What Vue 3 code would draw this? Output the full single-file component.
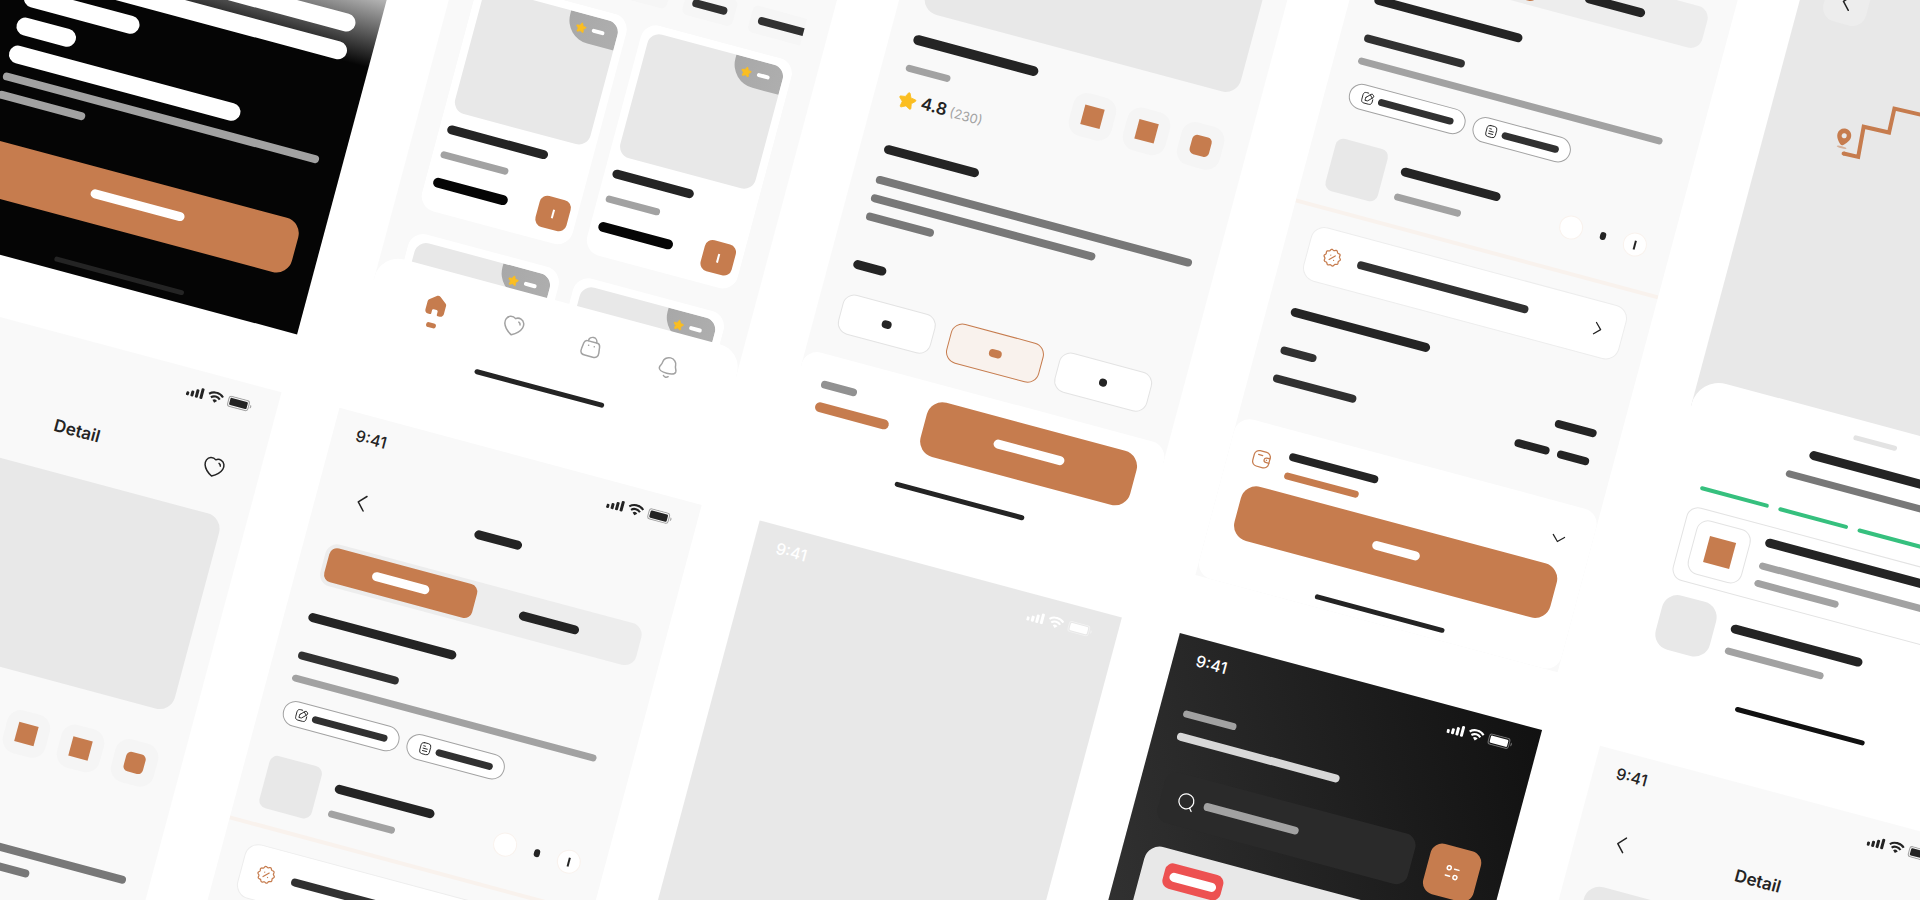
<script setup>
const screens = [
    { id: 1, type: 'welcome' },
    { id: 2, type: 'home' },
    { id: 3, type: 'detail', rating: '4.8', reviews: '(230)' },
    { id: 4, type: 'order' },
    { id: 5, type: 'tracking' },
    { id: 6, type: 'detail', title: 'Detail' },
    { id: 7, type: 'order', time: '9:41' },
    { id: 8, type: 'welcome', time: '9:41' },
    { id: 9, type: 'home', time: '9:41' },
    { id: 10, type: 'detail', time: '9:41', title: 'Detail' },
];

const welcomeLines = [327, 326, 119, 61, 239];
const welcomeNotes = [327, 90];

const chips = [
    { box: 88, bar: 64, active: true },
    { box: 84, bar: 64 },
    { box: 52, bar: 36 },
    { box: 88, bar: 72 },
];

const products = [
    { title: 104, sub: 70, price: 77 },
    { title: 84, sub: 56, price: 77 },
    { title: 104, sub: 70, price: 77 },
    { title: 84, sub: 56, price: 77 },
];

const tabs = [
    { icon: 'home', active: true },
    { icon: 'heart' },
    { icon: 'bag' },
    { icon: 'bell' },
];

const extras = [{ round: false }, { round: false }, { round: true }];
const description = [327, 232, 70];
const sizes = [{ bar: 10 }, { bar: 13, active: true }, { bar: 8 }];

const addressActions = [
    { icon: 'edit', bar: 78 },
    { icon: 'note', bar: 59 },
];

const payments = [
    { label: 37, values: [43] },
    { label: 86, values: [36, 33] },
];

const steps = [true, true, true, false];

// Borde ondulado del icono de descuento
const scallop = () => {
    const points = [];
    for (let i = 0; i < 100; i++) {
        const a = (i / 100) * Math.PI * 2;
        const r = 9.4 + 0.7 * Math.cos(a * 10);
        points.push(`${(12 + r * Math.cos(a)).toFixed(2)} ${(12 + r * Math.sin(a)).toFixed(2)}`);
    }
    return `M${points.join('L')}Z`;
};

const icons = {
    back: ['M15.5 19.5L8.5 12l7-7.5'],
    right: ['M8.5 5l7 7-7 7'],
    down: ['M19 8.5l-7 7-7-7'],
    heart: [
        'M2.87 11.6C1.8 8.25 3.05 4.42 6.57 3.28c1.85-.6 3.9-.24 5.44.92 1.46-1.13 3.57-1.52 5.42-.92 3.52 1.14 4.78 4.97 3.71 8.32-1.67 5.31-9.13 9.4-9.13 9.4S4.6 16.97 2.87 11.6Z',
        'M16 6.7c1.07.35 1.83 1.3 1.92 2.43',
    ],
    bag: [
        'M16.51 21.5H8.17c-3.07 0-5.42-1.11-4.75-5.55l.77-6.05c.41-2.22 1.83-3.07 3.07-3.07h10.18c1.26 0 2.6.91 3.07 3.07l.78 6.05c.57 3.95-1.71 5.55-4.78 5.55Z',
        'M16.65 6.6a4.32 4.32 0 0 0-8.64 0',
        'M15.3 11.1h-.05',
        'M9.47 11.1h-.05',
    ],
    bell: [
        'M12 17.85c5.64 0 8.25-.72 8.5-3.63 0-2.9-1.82-2.72-1.82-6.28C18.68 5.16 16.04 2 12 2S5.32 5.16 5.32 7.94c0 3.56-1.82 3.38-1.82 6.28.25 2.92 2.86 3.63 8.5 3.63Z',
        'M14.39 20.86c-1.36 1.51-3.49 1.53-4.86 0',
    ],
    home: [
        'M9.14 20.77v-3.06c0-.78.64-1.41 1.43-1.42h2.87c.8 0 1.44.63 1.44 1.42v3.07c0 .66.54 1.2 1.22 1.22h1.95c1.95 0 3.53-1.56 3.53-3.49V9.81c0-.74-.36-1.44-.96-1.92L13.96 2.65c-1.2-.87-2.7-.87-3.9 0L3.46 7.9C2.85 8.37 2.5 9.06 2.5 9.82v8.7C2.5 20.44 4.07 22 6.03 22h1.88c.7 0 1.24-.55 1.24-1.23Z',
    ],
    search: ['M20.8 11.8a9 9 0 1 1-18 0 9 9 0 0 1 18 0Z', 'M17.6 18.6l2.9 3.6'],
    filter: ['M10 8a2 2 0 1 1-4 0 2 2 0 0 1 4 0Z', 'M13.5 8H18', 'M6 16h4.5', 'M18 16a2 2 0 1 1-4 0 2 2 0 0 1 4 0Z'],
    edit: [
        'M11.5 2.75H7.75c-3.2 0-5 1.9-5 5.06v8.37c0 3.17 1.8 5.07 5 5.07h8.4c3.2 0 5-1.9 5-5.07V12',
        'M8.83 10.92l7.14-7.15a2.5 2.5 0 0 1 3.53 0l1.16 1.17a2.5 2.5 0 0 1 0 3.52l-7.18 7.18a2.1 2.1 0 0 1-1.46.61H8.43l.09-3.61c.01-.52-.05-1.36.31-1.72Z',
        'M15 5l4.5 4.5',
    ],
    note: [
        'M8.5 2.25h7a5 5 0 0 1 5 5v9.5a5 5 0 0 1-5 5h-7a5 5 0 0 1-5-5v-9.5a5 5 0 0 1 5-5Z',
        'M8.3 7.8h3',
        'M8.3 12h7.4',
        'M8.3 16.2h7.4',
    ],
    discount: [scallop(), 'M15 9l-6 6', 'M9.6 9.4h-.05', 'M14.5 14.7h-.05'],
    wallet: [
        'M21.64 14.4h-4.05a2.7 2.7 0 0 1 0-5.39h4.05',
        'M18.05 11.64h-.31',
        'M7.75 2.5h8.14a5.75 5.75 0 0 1 5.75 5.75v7.5a5.75 5.75 0 0 1-5.75 5.75H7.75A5.75 5.75 0 0 1 2 15.75v-7.5A5.75 5.75 0 0 1 7.75 2.5Z',
        'M7.04 7.3h5.08',
    ],
};

const star =
    'M17.92 14.32a1.1 1.1 0 0 0-.32.97l.89 4.92c.07.42-.1.84-.45 1.08-.34.25-.79.28-1.16.08l-4.43-2.31a1.1 1.1 0 0 0-1.04 0l-4.43 2.31a1.1 1.1 0 0 1-1.61-1.17l.89-4.92a1.1 1.1 0 0 0-.32-.98L2.33 10.77a1.08 1.08 0 0 1-.27-1.13c.13-.39.47-.68.88-.74l4.97-.72c.38-.04.71-.27.88-.61l2.19-4.49c.4-.77 1.55-.77 1.95 0l2.22 4.49c.16.33.47.55.83.61l4.97.72c.42.06.77.35.91.74.13.4.02.84-.29 1.13Z';

const width = (n) => ({ width: `${n}px` });
</script>

<template>
    <main class="stage">
        <div class="board">
            <section v-for="screen in screens" :key="screen.id" class="screen" :class="screen.type">
                <!-- Barra de estado -->
                <div class="status">
                    <span class="time">{{ screen.time }}</span>
                    <svg class="status-icons" viewBox="0 0 67 12" fill="currentColor">
                        <rect x="0" y="7.2" width="3" height="4" rx="1" />
                        <rect x="4.7" y="5.2" width="3" height="6" rx="1" />
                        <rect x="9.3" y="2.8" width="3" height="8.4" rx="1" />
                        <rect x="14" y="0.5" width="3" height="10.7" rx="1" />
                        <g fill="none" stroke="currentColor" stroke-width="2.1">
                            <path d="M22.4 4.1a10.3 10.3 0 0 1 14.4 0" />
                            <path d="M25 7a6.5 6.5 0 0 1 9.2 0" />
                        </g>
                        <path d="M27.2 9.1a3.5 3.5 0 0 1 4.8 0l-2.4 2.4Z" />
                        <rect x="42.8" y="0.7" width="21" height="10.4" rx="2.6" fill="none" stroke="currentColor" opacity="0.4" />
                        <rect x="44.3" y="2.2" width="18" height="7.4" rx="1.3" />
                        <path d="M65.3 4v4a2.2 2.2 0 0 0 0-4Z" opacity="0.4" />
                    </svg>
                </div>

                <!-- Bienvenida -->
                <template v-if="screen.type === 'welcome'">
                    <div class="welcome-copy">
                        <span v-for="(w, i) in welcomeLines" :key="'l' + i" class="bar h18 white" :style="width(w)"></span>
                        <span v-for="(w, i) in welcomeNotes" :key="'n' + i" class="bar h8 soft" :style="width(w)"></span>
                    </div>
                    <button type="button" class="primary welcome-button" aria-label="Get started">
                        <span class="bar h9 white" :style="width(97)"></span>
                    </button>
                    <span class="home-line"></span>
                </template>

                <!-- Inicio -->
                <template v-else-if="screen.type === 'home'">
                    <div class="location">
                        <span class="bar h7 soft" :style="width(55)"></span>
                        <span class="bar h8 pale" :style="width(168)"></span>
                    </div>
                    <div class="search-row">
                        <label class="search">
                            <svg class="icon i20" viewBox="0 0 24 24"><path v-for="d in icons.search" :key="d" :d="d" /></svg>
                            <span class="bar h8 soft" :style="width(98)"></span>
                            <input type="text" aria-label="Search" />
                        </label>
                        <button type="button" class="filter" aria-label="Filter">
                            <svg class="icon i24" viewBox="0 0 24 24"><path v-for="d in icons.filter" :key="d" :d="d" /></svg>
                        </button>
                    </div>
                    <div class="banner">
                        <span class="promo"><span class="bar h9 white" :style="width(48)"></span></span>
                    </div>
                    <div class="chips">
                        <button
                            v-for="(chip, i) in chips"
                            :key="i"
                            type="button"
                            class="chip"
                            :class="{ active: chip.active }"
                            :style="width(chip.box)"
                            aria-label="Category"
                        >
                            <span class="bar h8 coal" :style="width(chip.bar)"></span>
                        </button>
                    </div>
                    <div class="products">
                        <article v-for="(product, i) in products" :key="i" class="product">
                            <div class="product-photo">
                                <div class="badge">
                                    <svg class="star i12" viewBox="0 0 24 24"><path :d="star" /></svg>
                                    <span class="bar h4 white" :style="width(13)"></span>
                                </div>
                            </div>
                            <span class="bar h9 ink product-title" :style="width(product.title)"></span>
                            <span class="bar h7 soft product-sub" :style="width(product.sub)"></span>
                            <div class="buy">
                                <span class="bar h10 black" :style="width(product.price)"></span>
                                <button type="button" class="add" aria-label="Add"><span class="tick"></span></button>
                            </div>
                        </article>
                    </div>
                    <nav class="tabs">
                        <div class="tab-row">
                            <button v-for="tab in tabs" :key="tab.icon" type="button" class="tab" :class="{ active: tab.active }" :aria-label="tab.icon">
                                <svg class="icon i24" viewBox="0 0 24 24"><path v-for="d in icons[tab.icon]" :key="d" :d="d" /></svg>
                                <span v-if="tab.active" class="bar h5 brand" :style="width(10)"></span>
                            </button>
                        </div>
                        <span class="home-line"></span>
                    </nav>
                </template>

                <!-- Detalle -->
                <template v-else-if="screen.type === 'detail'">
                    <div class="head">
                        <button type="button" class="square" aria-label="Back">
                            <svg class="icon i24" viewBox="0 0 24 24"><path v-for="d in icons.back" :key="d" :d="d" /></svg>
                        </button>
                        <h2 class="head-title">{{ screen.title }}</h2>
                        <button type="button" class="square" aria-label="Favorite">
                            <svg class="icon i24" viewBox="0 0 24 24"><path v-for="d in icons.heart" :key="d" :d="d" /></svg>
                        </button>
                    </div>
                    <div class="photo"></div>
                    <span class="bar h10 ink detail-name" :style="width(129)"></span>
                    <div class="detail-row">
                        <div class="detail-info">
                            <span class="bar h7 soft" :style="width(46)"></span>
                            <div class="rating">
                                <svg class="star i20" viewBox="0 0 24 24"><path :d="star" /></svg>
                                <p v-if="screen.rating"><strong>{{ screen.rating }}</strong> <small>{{ screen.reviews }}</small></p>
                            </div>
                        </div>
                        <div class="extras">
                            <span v-for="(extra, i) in extras" :key="i" class="extra">
                                <span class="extra-mark" :class="{ round: extra.round }"></span>
                            </span>
                        </div>
                    </div>
                    <span class="bar h9 ink detail-heading" :style="width(98)"></span>
                    <div class="description">
                        <span v-for="(w, i) in description" :key="i" class="bar h8 gray" :style="width(w)"></span>
                    </div>
                    <span class="bar h9 ink size-heading" :style="width(34)"></span>
                    <div class="sizes">
                        <button v-for="(size, i) in sizes" :key="i" type="button" class="size" :class="{ active: size.active }" aria-label="Size">
                            <span class="bar h8" :class="size.active ? 'brand' : 'ink'" :style="width(size.bar)"></span>
                        </button>
                    </div>
                    <div class="sheet detail-sheet">
                        <div class="detail-buy">
                            <div class="price">
                                <span class="bar h8 mid" :style="width(37)"></span>
                                <span class="bar h10 brand" :style="width(76)"></span>
                            </div>
                            <button type="button" class="primary" aria-label="Buy now">
                                <span class="bar h9 white" :style="width(73)"></span>
                            </button>
                        </div>
                        <span class="home-line"></span>
                    </div>
                </template>

                <!-- Pedido -->
                <template v-else-if="screen.type === 'order'">
                    <div class="head">
                        <button type="button" class="square" aria-label="Back">
                            <svg class="icon i24" viewBox="0 0 24 24"><path v-for="d in icons.back" :key="d" :d="d" /></svg>
                        </button>
                        <span class="bar h9 ink" :style="width(49)"></span>
                    </div>
                    <div class="toggle">
                        <button type="button" class="toggle-item active" aria-label="Deliver">
                            <span class="bar h9 white" :style="width(59)"></span>
                        </button>
                        <button type="button" class="toggle-item" aria-label="Pick up">
                            <span class="bar h9 ink" :style="width(62)"></span>
                        </button>
                    </div>
                    <div class="address">
                        <span class="bar h9 ink" :style="width(153)"></span>
                        <span class="bar h8 coal address-name" :style="width(104)"></span>
                        <span class="bar h7 soft address-line" :style="width(315)"></span>
                        <div class="pills">
                            <button v-for="action in addressActions" :key="action.icon" type="button" class="pill" :aria-label="action.icon">
                                <svg class="icon i14" viewBox="0 0 24 24"><path v-for="d in icons[action.icon]" :key="d" :d="d" /></svg>
                                <span class="bar h7 coal" :style="width(action.bar)"></span>
                            </button>
                        </div>
                    </div>
                    <div class="item">
                        <span class="thumb"></span>
                        <div class="item-text">
                            <span class="bar h9 ink" :style="width(103)"></span>
                            <span class="bar h7 soft" :style="width(69)"></span>
                        </div>
                        <div class="quantity">
                            <button type="button" class="round-button" aria-label="Less"></button>
                            <span class="bar h8 ink" :style="width(6)"></span>
                            <button type="button" class="round-button" aria-label="More"><span class="tick"></span></button>
                        </div>
                    </div>
                    <hr class="divider" />
                    <button type="button" class="discount" aria-label="Discount">
                        <svg class="icon i20 orange" viewBox="0 0 24 24"><path v-for="d in icons.discount" :key="d" :d="d" /></svg>
                        <span class="bar h8 coal" :style="width(177)"></span>
                        <svg class="icon i20 push" viewBox="0 0 24 24"><path v-for="d in icons.right" :key="d" :d="d" /></svg>
                    </button>
                    <div class="summary">
                        <span class="bar h9 ink summary-title" :style="width(144)"></span>
                        <div v-for="(row, i) in payments" :key="i" class="summary-row">
                            <span class="bar h8 coal" :style="width(row.label)"></span>
                            <div class="summary-values">
                                <span v-for="w in row.values" :key="w" class="bar h8 ink" :style="width(w)"></span>
                            </div>
                        </div>
                    </div>
                    <div class="sheet order-sheet">
                        <div class="pay">
                            <svg class="icon i20 orange" viewBox="0 0 24 24"><path v-for="d in icons.wallet" :key="d" :d="d" /></svg>
                            <div class="pay-text">
                                <span class="bar h8 ink" :style="width(92)"></span>
                                <span class="bar h7 brand" :style="width(77)"></span>
                            </div>
                            <svg class="icon i20 push" viewBox="0 0 24 24"><path v-for="d in icons.down" :key="d" :d="d" /></svg>
                        </div>
                        <button type="button" class="primary" aria-label="Order">
                            <span class="bar h9 white" :style="width(49)"></span>
                        </button>
                        <span class="home-line"></span>
                    </div>
                </template>

                <!-- Seguimiento -->
                <template v-else>
                    <svg class="map" viewBox="0 0 375 500">
                        <path class="route" d="M82 237L97 236.5L94.5 206L120.5 205L119.5 180.5L160 179L159 150L230 148" />
                        <circle class="route-start" cx="82" cy="237" r="2" />
                        <ellipse cx="78.5" cy="231.5" rx="5" ry="1" fill="#c67c4e" opacity="0.5" />
                        <path
                            fill="#c67c4e"
                            fill-rule="evenodd"
                            d="M78 212.5c4 0 7 3 7 7 0 4-3.5 7.5-5.5 9.5-1 .8-2 .8-3 0-2-2-5.5-5.5-5.5-9.5 0-4 3-7 7-7Zm0 4.7a2.5 2.5 0 1 0 0 5 2.5 2.5 0 0 0 0-5Z"
                        />
                    </svg>
                    <div class="head">
                        <button type="button" class="square filled" aria-label="Back">
                            <svg class="icon i24" viewBox="0 0 24 24"><path v-for="d in icons.back" :key="d" :d="d" /></svg>
                        </button>
                    </div>
                    <div class="tracking-sheet">
                        <span class="bar h5 light handle" :style="width(45)"></span>
                        <span class="bar h9 ink tracking-title" :style="width(121)"></span>
                        <span class="bar h7 gray tracking-sub" :style="width(157)"></span>
                        <div class="steps">
                            <span v-for="(done, i) in steps" :key="i" class="step" :class="{ done }"></span>
                        </div>
                        <div class="delivery">
                            <span class="delivery-icon"><span class="delivery-mark"></span></span>
                            <div class="delivery-text">
                                <span class="bar h9 ink" :style="width(180)"></span>
                                <span class="bar h7 soft delivery-line" :style="width(200)"></span>
                                <span class="bar h7 soft" :style="width(87)"></span>
                            </div>
                        </div>
                        <div class="courier">
                            <span class="avatar"></span>
                            <div class="courier-text">
                                <span class="bar h9 ink" :style="width(136)"></span>
                                <span class="bar h7 soft" :style="width(102)"></span>
                            </div>
                        </div>
                        <span class="home-line"></span>
                    </div>
                </template>
            </section>
        </div>
    </main>
</template>

<style>
body {
    margin: 0;
    background: #ffffff;
}
</style>

<style scoped>
.stage {
    height: 100vh;
    overflow: hidden;
    background: #ffffff;
    font-family: Inter, "Liberation Sans", sans-serif;
    color: #242424;
}

.stage * {
    box-sizing: border-box;
}

/* Tablero inclinado con todas las pantallas */
.board {
    display: grid;
    grid-template-columns: repeat(5, 375px);
    grid-auto-rows: 812px;
    gap: 60px;
    width: max-content;
    transform: translate(145px, -547px) rotate(15deg);
    transform-origin: 0 0;
}

.screen {
    position: relative;
    display: flex;
    flex-direction: column;
    overflow: hidden;
    background: #f9f9f9;
}

button {
    display: flex;
    align-items: center;
    justify-content: center;
    margin: 0;
    padding: 0;
    border: 0;
    background: none;
    color: inherit;
    font: inherit;
}

/* Barras de contenido */
.bar {
    display: block;
    flex: none;
    border-radius: 9px;
}

.h4 { height: 4px; }
.h5 { height: 5px; }
.h7 { height: 7px; }
.h8 { height: 8px; }
.h9 { height: 9px; }
.h10 { height: 10px; }
.h18 { height: 18px; }

.white { background: #ffffff; }
.pale { background: #d8d8d8; }
.light { background: #e3e3e3; }
.soft { background: #a2a2a2; }
.mid { background: #919191; }
.gray { background: #787878; }
.coal { background: #313131; }
.ink { background: #242424; }
.black { background: #050505; }
.brand { background: #c67c4e; }

.icon {
    flex: none;
    fill: none;
    stroke: currentColor;
    stroke-width: 1.5px;
    stroke-linecap: round;
    stroke-linejoin: round;
}

.star {
    flex: none;
    fill: #fbbe21;
    stroke: #fbbe21;
    stroke-width: 1px;
}

.i12 { width: 12px; height: 12px; }
.i14 { width: 14px; height: 14px; }
.i20 { width: 20px; height: 20px; }
.i24 { width: 24px; height: 24px; }

.orange {
    color: #c67c4e;
}

.push {
    margin-left: auto;
}

.status {
    position: relative;
    display: flex;
    flex: none;
    align-items: center;
    justify-content: space-between;
    height: 44px;
    padding: 0 25px 0 23px;
}

.time {
    font-size: 16px;
    line-height: 20px;
    font-weight: 500;
}

.status-icons {
    width: 67px;
    height: 12px;
}

.home-line {
    flex: none;
    width: 134px;
    height: 5px;
    margin: auto auto 8px;
    border-radius: 3px;
    background: #242424;
}

.primary {
    flex: none;
    height: 56px;
    padding-bottom: 3px;
    border-radius: 16px;
    background: #c67c4e;
}

.head {
    position: relative;
    display: grid;
    grid-template-columns: 44px 1fr 44px;
    flex: none;
    align-items: center;
    justify-items: center;
    height: 44px;
    margin: 24px 24px 0;
}

.head-title {
    margin: 0;
    font-size: 17px;
    line-height: 20px;
    font-weight: 600;
}

.square {
    width: 44px;
    height: 44px;
    border-radius: 14px;
}

.square.filled {
    background: #ededed;
}

/* Bienvenida */
.welcome {
    background: linear-gradient(#e8e8e8 446px, #050505 536px);
}

.welcome .status,
.home .status {
    color: #ffffff;
}

.welcome-copy {
    display: flex;
    flex-direction: column;
    gap: 11px;
    margin: 445px 24px 0;
}

.welcome-button {
    margin: 41px 24px 0;
}

/* Inicio */
.home {
    background:
        linear-gradient(241deg, #111111, #313131) 0 0 / 100% 280px no-repeat,
        linear-gradient(#f9f9f9 740px, #ffffff 740px);
}

.location {
    display: flex;
    flex-direction: column;
    gap: 16px;
    padding: 29px 24px 0;
}

.search-row {
    display: flex;
    gap: 16px;
    margin: 31px 24px 0;
}

.search {
    display: flex;
    flex: 1;
    align-items: center;
    gap: 8px;
    min-width: 0;
    height: 52px;
    padding: 0 16px;
    border-radius: 12px;
    background: #2a2a2a;
    color: #ffffff;
}

.search input {
    flex: 1;
    width: 0;
    min-width: 0;
    padding: 0;
    border: 0;
    outline: 0;
    background: transparent;
    color: #ffffff;
    font: inherit;
}

.filter {
    flex: none;
    width: 52px;
    height: 52px;
    border-radius: 12px;
    background: #c67c4e;
    color: #ffffff;
}

.banner {
    flex: none;
    height: 140px;
    margin: 24px 24px 0;
    padding: 13px 23px;
    border-radius: 16px;
    background: #e8e8e8;
}

.promo {
    display: flex;
    align-items: center;
    justify-content: center;
    width: 60px;
    height: 26px;
    border-radius: 8px;
    background: #ed5151;
}

.chips {
    display: flex;
    flex: none;
    gap: 16px;
    margin: 24px 24px 0;
    overflow: hidden;
}

.chip {
    flex: none;
    height: 28px;
    border-radius: 6px;
    background: #f6f6f6;
}

.chip.active {
    background: #c67c4e;
}

.products {
    display: grid;
    flex: 1;
    grid-template-columns: 156px 156px;
    align-content: start;
    gap: 24px 15px;
    min-height: 0;
    margin: 17px 24px 60px;
    overflow: hidden;
}

.product {
    height: 238px;
    padding: 8px;
    border-radius: 16px;
    background: #ffffff;
}

.product-photo {
    position: relative;
    height: 128px;
    overflow: hidden;
    border-radius: 12px;
    background: #e8e8e8;
}

.badge {
    position: absolute;
    top: 0;
    right: 0;
    display: flex;
    align-items: center;
    gap: 5px;
    width: 51px;
    height: 28px;
    padding-left: 8px;
    border-radius: 0 12px 0 24px;
    background: linear-gradient(100deg, #a8a8a8, #aeaeae);
}

.product-title {
    margin-top: 14px;
}

.product-sub {
    margin-top: 18px;
}

.buy {
    display: flex;
    align-items: center;
    justify-content: space-between;
    margin-top: 9px;
}

.add {
    width: 32px;
    height: 32px;
    border-radius: 8px;
    background: #c67c4e;
    color: #ffffff;
}

.tick {
    width: 2px;
    height: 9px;
    background: currentColor;
}

.tabs {
    position: absolute;
    right: 0;
    bottom: 0;
    left: 0;
    display: flex;
    flex-direction: column;
    height: 100px;
    padding-top: 24px;
    border-radius: 24px 24px 0 0;
    background: #ffffff;
}

.tab-row {
    display: flex;
    justify-content: space-between;
    padding: 0 56px 0 55px;
}

.tab {
    flex-direction: column;
    justify-content: flex-start;
    gap: 6px;
    color: #a2a2a2;
}

.tab.active {
    color: #c67c4e;
}

.tab.active .icon {
    fill: currentColor;
    stroke: none;
}

/* Detalle */
.detail {
    background: linear-gradient(#f9f9f9 712px, #ffffff 712px);
}

.photo {
    flex: none;
    height: 202px;
    margin: 24px 24px 0;
    border-radius: 16px;
    background: #e8e8e8;
}

.detail-name {
    margin: 24px 24px 0;
}

.detail-row {
    display: flex;
    flex: none;
    justify-content: space-between;
    margin: 2px 24px 0;
}

.detail-info {
    padding-top: 19px;
}

.rating {
    display: flex;
    align-items: center;
    gap: 4px;
    height: 24px;
    margin-top: 16px;
}

.rating p {
    margin: 0;
    font-size: 12px;
    line-height: 20px;
}

.rating strong {
    font-size: 17px;
    font-weight: 600;
}

.rating small {
    font-size: 13px;
    color: #a2a2a2;
}

.extras {
    display: flex;
    gap: 12px;
}

.extra {
    display: flex;
    align-items: center;
    justify-content: center;
    width: 44px;
    height: 44px;
    border-radius: 14px;
    background: #f5f5f5;
}

.extra-mark {
    width: 20px;
    height: 20px;
    background: #c67c4e;
}

.extra-mark.round {
    border-radius: 5px;
}

.detail-heading {
    margin: 36px 24px 0;
}

.description {
    display: flex;
    flex-direction: column;
    gap: 11px;
    margin: 23px 24px 0;
}

.size-heading {
    margin: 41px 24px 0;
}

.sizes {
    display: flex;
    gap: 16px;
    margin: 25px 24px 0;
}

.size {
    width: 96px;
    height: 41px;
    border: 1px solid #e3e3e3;
    border-radius: 12px;
    background: #ffffff;
}

.size.active {
    border-color: #c67c4e;
    background: #f9f2ed;
}

.sheet {
    display: flex;
    flex: none;
    flex-direction: column;
    margin-top: auto;
    border-radius: 16px;
    background: #ffffff;
}

.detail-sheet {
    height: 118px;
    padding: 16px 24px 0;
}

.detail-buy {
    display: flex;
    gap: 34px;
}

.detail-buy .primary {
    flex: 1;
}

.price {
    display: flex;
    flex-direction: column;
    gap: 14px;
    padding-top: 10px;
}

/* Pedido */
.order .head {
    margin-top: 20px;
}

.toggle {
    display: flex;
    flex: none;
    height: 43px;
    margin: 24px 24px 0;
    padding: 4px;
    border-radius: 12px;
    background: #ededed;
}

.toggle-item {
    width: 153px;
    border-radius: 8px;
}

.toggle-item.active {
    background: #c67c4e;
}

.address {
    margin: 30px 24px 0;
}

.address-name {
    margin-top: 31px;
}

.address-line {
    margin-top: 16px;
}

.pills {
    display: flex;
    gap: 8px;
    margin-top: 18px;
}

.pill {
    gap: 4px;
    height: 26px;
    padding: 0 11px;
    border: 1px solid #a2a2a2;
    border-radius: 13px;
    background: #ffffff;
}

.item {
    display: flex;
    gap: 16px;
    margin: 32px 24px 0;
}

.thumb {
    width: 54px;
    height: 54px;
    border-radius: 8px;
    background: #e8e8e8;
}

.item-text {
    display: flex;
    flex-direction: column;
    gap: 18px;
    padding-top: 12px;
}

.quantity {
    display: flex;
    align-items: center;
    gap: 18px;
    margin-left: auto;
}

.round-button {
    width: 24px;
    height: 24px;
    border: 1px solid #f9f2ed;
    border-radius: 50%;
    background: #ffffff;
}

.divider {
    flex: none;
    width: 100%;
    height: 4px;
    margin: 16px 0 0;
    border: 0;
    background: #f9f2ed;
}

.discount {
    flex: none;
    justify-content: flex-start;
    gap: 16px;
    height: 56px;
    margin: 16px 24px 0;
    padding: 0 15px;
    border: 1px solid #ededed;
    border-radius: 14px;
    background: #ffffff;
}

.summary {
    margin: 30px 24px 0;
}

.summary-title {
    margin-bottom: 31px;
}

.summary-row {
    display: flex;
    justify-content: space-between;
    margin-bottom: 21px;
}

.summary-values {
    display: flex;
    gap: 8px;
}

.order-sheet {
    height: 165px;
    padding: 22px 24px 0;
}

.pay {
    display: flex;
    align-items: center;
    gap: 16px;
    margin-bottom: 14px;
}

.pay-text {
    display: flex;
    flex-direction: column;
    gap: 12px;
}

/* Seguimiento */
.tracking {
    background: linear-gradient(#e8e8e8 520px, #ffffff 520px);
}

.map {
    position: absolute;
    top: 0;
    left: 0;
    width: 375px;
    height: 500px;
}

.route {
    fill: none;
    stroke: #c67c4e;
    stroke-width: 4px;
}

.route-start {
    fill: #c67c4e;
}

.tracking-sheet {
    position: relative;
    display: flex;
    flex-direction: column;
    height: 322px;
    margin-top: auto;
    padding: 16px 24px 0;
    border-radius: 28px 28px 0 0;
    background: #ffffff;
}

.handle {
    align-self: center;
}

.tracking-title {
    align-self: center;
    margin-top: 21px;
}

.tracking-sub {
    align-self: center;
    margin-top: 16px;
}

.steps {
    display: flex;
    gap: 10px;
    margin-top: 31px;
    padding: 0 6px;
}

.step {
    flex: 1;
    height: 4px;
    border-radius: 2px;
    background: #e3e3e3;
}

.step.done {
    background: #36c07e;
}

.delivery {
    display: flex;
    flex: none;
    gap: 14px;
    height: 76px;
    margin-top: 17px;
    padding: 9px 12px;
    border: 1px solid #e3e3e3;
    border-radius: 12px;
}

.delivery-icon {
    display: flex;
    flex: none;
    align-items: center;
    justify-content: center;
    width: 56px;
    height: 56px;
    border: 1px solid #e3e3e3;
    border-radius: 12px;
}

.delivery-mark {
    width: 27px;
    height: 27px;
    background: #c67c4e;
}

.delivery-text {
    display: flex;
    flex-direction: column;
    gap: 11px;
    padding-top: 2px;
}

.delivery-line {
    margin-top: 5px;
}

.courier {
    display: flex;
    gap: 16px;
    margin-top: 14px;
}

.avatar {
    width: 56px;
    height: 56px;
    border-radius: 16px;
    background: #e8e8e8;
}

.courier-text {
    display: flex;
    flex-direction: column;
    gap: 15px;
    padding-top: 14px;
}

.tracking .home-line {
    background: #111111;
}
</style>
